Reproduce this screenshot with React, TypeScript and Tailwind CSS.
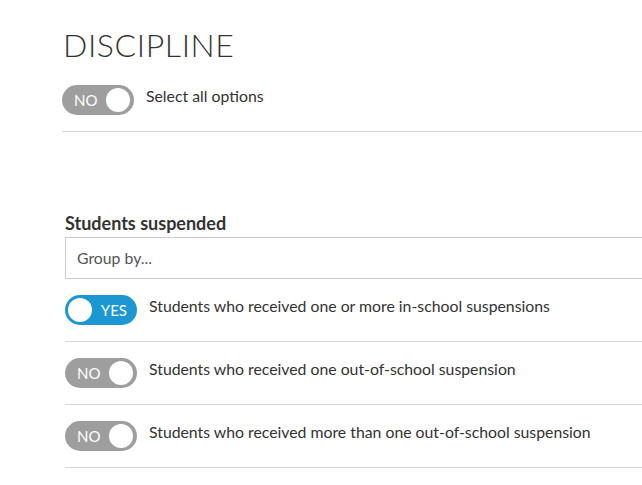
import React from "react";

type ToggleProps = { on?: boolean };

const Toggle = ({ on = false }: ToggleProps) => {
  return (
    <div
      className={`relative shrink-0 w-[72px] h-[30px] rounded-full flex items-center ${
        on ? "bg-[#1b97d4] justify-end pr-[10px]" : "bg-[#9e9e9e] pl-[12px]"
      }`}
    >
      <span className="text-white text-[15px] leading-none">{on ? "YES" : "NO"}</span>
      <span
        className={`absolute top-[3px] w-[24px] h-[24px] rounded-full bg-white ${
          on ? "left-[3px]" : "right-[4px]"
        }`}
      />
    </div>
  );
};

const options = [
  { label: "Students who received one or more in-school suspensions", on: true },
  { label: "Students who received one out-of-school suspension", on: false },
  { label: "Students who received more than one out-of-school suspension", on: false },
];

const App = () => {
  return (
    <div className="w-[642px] h-[485px] overflow-hidden bg-white text-[#333] font-['Lato',sans-serif]">
      <div className="w-[700px] pl-[62px] pt-[27px]">
        <h1 className="text-[32px] leading-[36px] font-light tracking-[0.6px] text-[#333] pl-[1px]">
          DISCIPLINE
        </h1>
        <div className="flex items-start gap-[12px] mt-[22px] pb-[16px] border-b border-[#d6d6d6]">
          <Toggle />
          <span className="text-[15.8px] leading-[18px] mt-[2px]">Select all options</span>
        </div>

        <div className="ml-[3px] mt-[80px]">
          <h2 className="text-[18px] leading-[22px] font-bold text-[#333] mb-[3px]">
            Students suspended
          </h2>
          <div className="h-[42px] border border-[#cccccc] flex items-center px-[11px] text-[15.8px] text-[#555]">
            Group by...
          </div>
          {options.map((o) => (
            <div
              key={o.label}
              className="flex items-start gap-[12px] pt-[16px] pb-[16px] border-b border-[#d6d6d6]"
            >
              <Toggle on={o.on} />
              <span className="text-[15.8px] leading-[18px] mt-[2px]">{o.label}</span>
            </div>
          ))}
        </div>
      </div>
    </div>
  );
};

export default App;
